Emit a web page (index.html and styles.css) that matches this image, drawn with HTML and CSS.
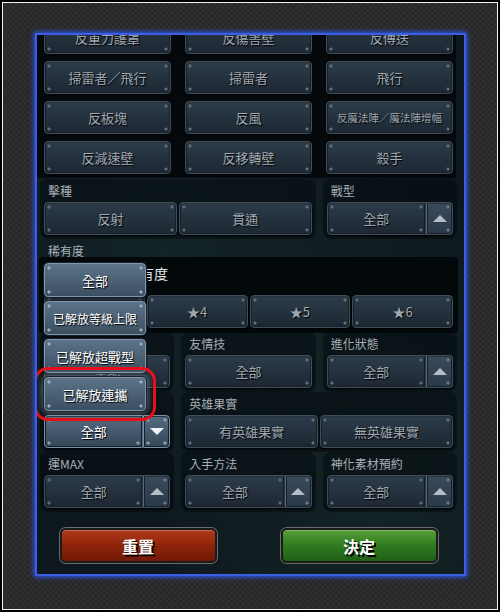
FILE: index.html
```html
<!DOCTYPE html>
<html lang="zh-Hant">
<head>
    <meta charset="UTF-8">
    <meta name="viewport" content="width=device-width, initial-scale=1.0">
    <title>篩選</title>
    <link rel="stylesheet" href="styles.css">
</head>
<body>
    <div class="frame">
        <div class="panel">
            <div class="types">
                <div class="btn">反重力護罩</div>
                <div class="btn">反傷害壁</div>
                <div class="btn">反傳送</div>
                <div class="btn">掃雷者／飛行</div>
                <div class="btn">掃雷者</div>
                <div class="btn">飛行</div>
                <div class="btn">反板塊</div>
                <div class="btn">反風</div>
                <div class="btn small">反魔法陣／魔法陣增幅</div>
                <div class="btn">反減速壁</div>
                <div class="btn">反移轉壁</div>
                <div class="btn">殺手</div>
            </div>
            <div class="filters">
                <div class="row">
                    <div class="field span2">
                        <div class="label">擊種</div>
                        <div class="seg">
                            <div class="btn">反射</div>
                            <div class="btn">貫通</div>
                        </div>
                    </div>
                    <div class="field">
                        <div class="label">戰型</div>
                        <div class="select">
                            <div class="btn val">全部</div>
                            <div class="btn arrow"><span class="tri up"></span></div>
                        </div>
                    </div>
                </div>
                <div class="label rarity-label">稀有度</div>
                <div class="rarity">
                    <div class="rarity-title">稀有度</div>
                    <div class="seg">
                        <div class="btn">★3</div>
                        <div class="btn">★4</div>
                        <div class="btn">★5</div>
                        <div class="btn">★6</div>
                    </div>
                </div>
                <div class="row">
                    <div class="field">
                        <div class="label">能力</div>
                        <div class="btn">全部</div>
                    </div>
                    <div class="field">
                        <div class="label">友情技</div>
                        <div class="btn">全部</div>
                    </div>
                    <div class="field">
                        <div class="label">進化狀態</div>
                        <div class="select">
                            <div class="btn val">全部</div>
                            <div class="btn arrow"><span class="tri up"></span></div>
                        </div>
                    </div>
                </div>
                <div class="row">
                    <div class="field">
                        <div class="label">連攜</div>
                        <div class="select open">
                            <div class="popup">
                                <div class="opt">全部</div>
                                <div class="opt narrow">已解放等級上限</div>
                                <div class="opt">已解放超戰型</div>
                                <div class="opt marked">已解放連攜</div>
                            </div>
                            <div class="btn val">全部</div>
                            <div class="btn arrow"><span class="tri down"></span></div>
                        </div>
                    </div>
                    <div class="field span2">
                        <div class="label">英雄果實</div>
                        <div class="seg">
                            <div class="btn">有英雄果實</div>
                            <div class="btn">無英雄果實</div>
                        </div>
                    </div>
                </div>
                <div class="row">
                    <div class="field">
                        <div class="label">運MAX</div>
                        <div class="select">
                            <div class="btn val">全部</div>
                            <div class="btn arrow"><span class="tri up"></span></div>
                        </div>
                    </div>
                    <div class="field">
                        <div class="label">入手方法</div>
                        <div class="select">
                            <div class="btn val">全部</div>
                            <div class="btn arrow"><span class="tri up"></span></div>
                        </div>
                    </div>
                    <div class="field">
                        <div class="label">神化素材預約</div>
                        <div class="select">
                            <div class="btn val">全部</div>
                            <div class="btn arrow"><span class="tri up"></span></div>
                        </div>
                    </div>
                </div>
                <div class="actions">
                    <div class="act reset">重置</div>
                    <div class="act ok">決定</div>
                </div>
            </div>
        </div>
    </div>
</body>
</html>
```

FILE: styles.css
```css
body {
    margin: 0;
    padding: 2px;
    background-color: black;
    font-family: "Noto Sans CJK TC", "Noto Sans", sans-serif;
}
.frame {
    width: 496px;
    height: 608px;
    box-sizing: border-box;
    border: 1px solid #f2f2f2;
    padding: 30px 0 0 32px;
    background:
        repeating-linear-gradient(45deg, rgba(255,255,255,0.025) 0 2px, transparent 2px 4px),
        repeating-linear-gradient(-45deg, rgba(0,0,0,0.12) 0 2px, transparent 2px 4px),
        #2b2b2b;
}
.panel {
    width: 431px;
    height: 543px;
    box-sizing: border-box;
    border: 2px solid #3a5fe0;
    box-shadow: 0 0 5px 1px #2c58ff;
    background:
        radial-gradient(ellipse at 30% 40%, rgba(40,70,70,0.25), transparent 60%),
        radial-gradient(ellipse at 80% 85%, rgba(40,70,60,0.25), transparent 50%),
        #0d181e;
    overflow: hidden;
}
.types {
    display: grid;
    grid-template-columns: repeat(3, 1fr);
    grid-auto-rows: 33px;
    gap: 7px 14px;
    margin: -14px 8px 0 0;
    padding: 0 3px 4px 7px;
    background: #05090c;
}
.btn {
    height: 33px;
    box-sizing: border-box;
    display: flex;
    align-items: center;
    justify-content: center;
    border: 1px solid #3f4e5c;
    border-radius: 4px;
    background:
        radial-gradient(circle at 4px 4px, #5f6d7a 1.2px, transparent 1.9px),
        radial-gradient(circle at calc(100% - 4px) 4px, #5f6d7a 1.2px, transparent 1.9px),
        radial-gradient(circle at 4px calc(100% - 4px), #5f6d7a 1.2px, transparent 1.9px),
        radial-gradient(circle at calc(100% - 4px) calc(100% - 4px), #5f6d7a 1.2px, transparent 1.9px),
        linear-gradient(#2d3c4a, #1c2732);
    box-shadow: inset 0 1px 0 rgba(255,255,255,0.08), inset 0 0 0 1px #17212a, 0 1px 2px #000;
    color: #9fa8b1;
    font-size: 13px;
    text-shadow: 1px 1px 1px #000;
    white-space: nowrap;
}
.btn.small {
    font-size: 10.5px;
}
.filters {
    padding: 5px 11px 0 7px;
}
.row {
    display: grid;
    grid-template-columns: repeat(3, 1fr);
    gap: 15px;
    margin-bottom: 8px;
}
.span2 {
    grid-column: span 2;
}
.field {
    background: rgba(2,7,10,0.45);
    box-shadow: 0 0 0 4px rgba(2,7,10,0.45);
    border-radius: 4px;
}
.label {
    font-size: 12px;
    line-height: 16px;
    height: 16px;
    margin-bottom: 3px;
    padding-left: 4px;
    color: #a7afb6;
}
.rarity-label {
    margin-bottom: -2px;
}
.rarity {
    margin: 0 -5px 3px;
    padding: 6px 5px 5px;
    background: #03080a;
    border-radius: 4px;
}
.rarity-title {
    font-size: 14px;
    line-height: 20px;
    color: #e4e8ec;
    padding-left: 82px;
    margin-bottom: 12px;
}
.seg {
    display: flex;
    gap: 2px;
}
.seg .btn {
    flex: 1;
}
.select {
    display: flex;
    position: relative;
}
.select .val {
    flex: 1;
    border-radius: 4px 0 0 4px;
}
.select .arrow {
    width: 27px;
    flex: none;
    border-radius: 0 4px 4px 0;
    border-left-color: #56687a;
    background:
        radial-gradient(circle at calc(100% - 4px) 4px, #6a7988 1.2px, transparent 1.9px),
        radial-gradient(circle at calc(100% - 4px) calc(100% - 4px), #6a7988 1.2px, transparent 1.9px),
        linear-gradient(#3a4b5c, #29394a);
}
.tri {
    width: 0;
    height: 0;
    border-left: 7px solid transparent;
    border-right: 7px solid transparent;
}
.tri.up {
    border-bottom: 7px solid #b5bdc5;
}
.tri.down {
    border-top: 7px solid #eef2f6;
}
.select.open .btn {
    border-color: #7a8fa3;
    color: #fff;
    background:
        radial-gradient(circle at 4px 4px, #8ea2b5 1.2px, transparent 1.9px),
        radial-gradient(circle at calc(100% - 4px) 4px, #8ea2b5 1.2px, transparent 1.9px),
        radial-gradient(circle at 4px calc(100% - 4px), #8ea2b5 1.2px, transparent 1.9px),
        radial-gradient(circle at calc(100% - 4px) calc(100% - 4px), #8ea2b5 1.2px, transparent 1.9px),
        linear-gradient(#566b80, #34475a);
}
.popup {
    position: absolute;
    left: 0;
    bottom: calc(100% + 4px);
    width: 102px;
    display: flex;
    flex-direction: column;
    gap: 4px;
    z-index: 2;
}
.opt {
    height: 34px;
    box-sizing: border-box;
    display: flex;
    align-items: center;
    justify-content: center;
    border: 1px solid #8296a9;
    border-radius: 4px;
    background:
        radial-gradient(circle at 4px 4px, #9bb0c3 1.2px, transparent 1.9px),
        radial-gradient(circle at calc(100% - 4px) 4px, #9bb0c3 1.2px, transparent 1.9px),
        radial-gradient(circle at 4px calc(100% - 4px), #9bb0c3 1.2px, transparent 1.9px),
        radial-gradient(circle at calc(100% - 4px) calc(100% - 4px), #9bb0c3 1.2px, transparent 1.9px),
        linear-gradient(#5c7388, #3b4f62);
    box-shadow: 0 0 0 1px #16212b, 0 2px 3px rgba(0,0,0,0.6);
    color: #fff;
    font-size: 13px;
    text-shadow: 1px 1px 1px #000;
    white-space: nowrap;
}
.opt.narrow {
    font-size: 12px;
}
.opt.marked {
    outline: 3px solid #e5101a;
    outline-offset: 7px;
    box-shadow: 0 0 0 1px #16212b, 0 0 6px 2px rgba(190,210,235,0.45);
}
.actions {
    display: flex;
    justify-content: center;
    gap: 64px;
    margin-top: 20px;
}
.act {
    width: 157px;
    height: 35px;
    box-sizing: border-box;
    display: flex;
    align-items: center;
    justify-content: center;
    border: 2px solid #1b1b1b;
    border-radius: 6px;
    box-shadow: 0 0 0 1px #6c6c6c, inset 0 1px 0 rgba(255,255,255,0.25);
    color: #fff;
    font-size: 16px;
    font-weight: bold;
    text-shadow: 2px 2px 0 #000;
}
.reset {
    background: linear-gradient(#b23a1c, #8d2409 50%, #711906);
}
.ok {
    background: linear-gradient(#56a03a, #2f7a1f 50%, #215f17);
}
```
